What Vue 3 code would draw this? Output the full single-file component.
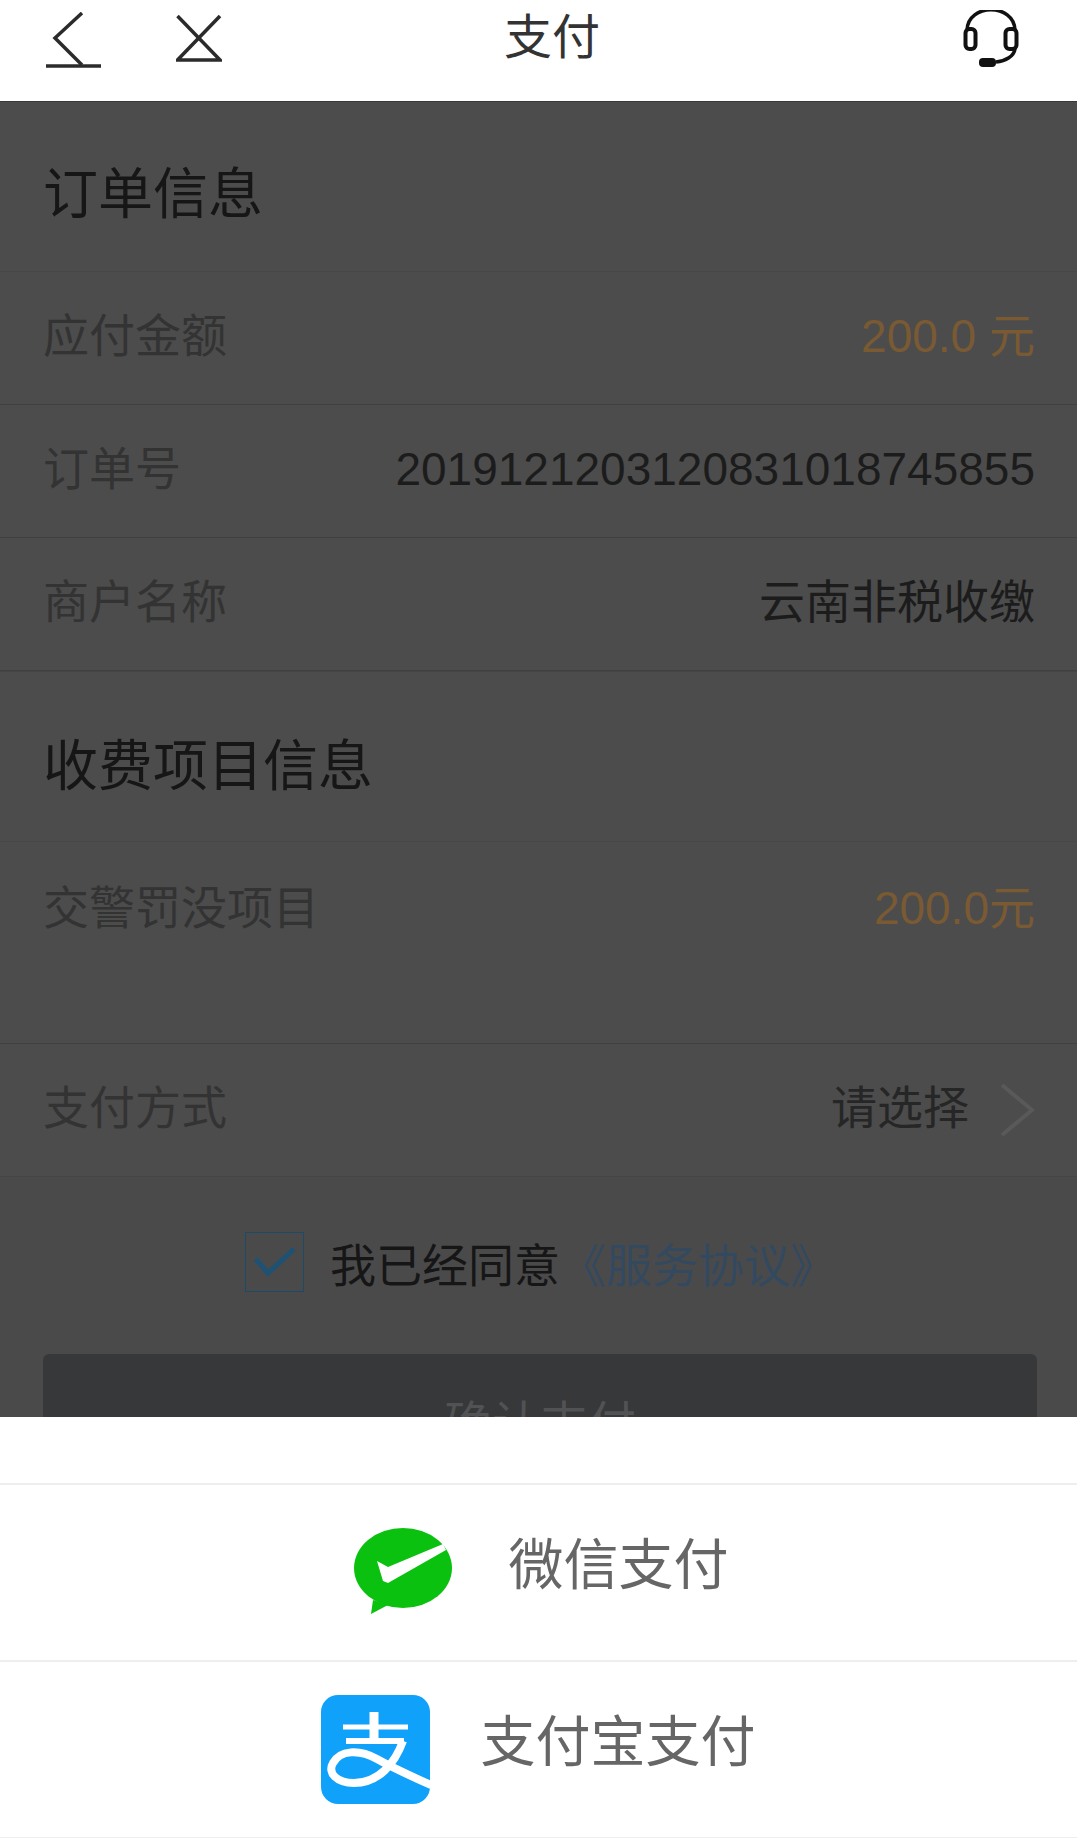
<script setup>
const orderRows = [
  { label: '应付金额', value: '200.0 元', accent: true },
  { label: '订单号', value: '2019121203120831018745855' },
  { label: '商户名称', value: '云南非税收缴' },
]
</script>

<template>
  <div class="page">
    <header class="nav">
      <svg class="back" width="56" height="56" viewBox="46 12 56 56" fill="none" stroke="#2b2b2b" stroke-width="3.500">
        <path d="M82 13 L55 38 L82 65" />
        <path d="M46 66 H101" />
      </svg>
      <svg class="close" width="46" height="48" viewBox="176 14 46 48" fill="none" stroke="#2b2b2b" stroke-width="3.500">
        <path d="M220 16 L177.500 60 H220 L177.500 16" />
      </svg>
      <h1 class="title">支付</h1>
      <svg class="service" width="58" height="58" viewBox="962 10 58 58" fill="none" stroke="#111" stroke-width="3.500">
        <path d="M967 30 C968 3 1014 3 1015 30" />
        <rect x="965.500" y="29" width="10" height="20" rx="4" stroke-width="4" />
        <rect x="1005.500" y="29" width="11" height="20" rx="4" stroke-width="4" />
        <path d="M1015 49 C1014 56 1006 61 996 62" />
        <rect x="979" y="58" width="17" height="9" rx="4" fill="#111" stroke="none" />
      </svg>
    </header>

    <main class="content">
      <section class="panel">
        <h2 class="head">订单信息</h2>
        <div v-for="row in orderRows" :key="row.label" class="row">
          <span class="label">{{ row.label }}</span>
          <span class="value" :class="{ accent: row.accent }">{{ row.value }}</span>
        </div>
      </section>

      <section class="panel">
        <h2 class="head second">收费项目信息</h2>
        <div class="row tall">
          <span class="label">交警罚没项目</span>
          <span class="value accent">200.0元</span>
        </div>
        <div class="row last">
          <span class="label">支付方式</span>
          <span class="choose">
            <span class="value soft">请选择</span>
            <svg class="chev" width="36" height="56" viewBox="0 0 36 56" fill="none" stroke="#5a595a" stroke-width="4">
              <path d="M3 3 L33 28 L3 53" />
            </svg>
          </span>
        </div>
      </section>

      <div class="agree">
        <span class="check">
          <svg width="42" height="30" viewBox="0 0 42 30" fill="none" stroke="#1d5274" stroke-width="5">
            <path d="M1.500 12 L14 26 L40 2" />
          </svg>
        </span>
        <span class="agree-text">我已经同意</span>
        <span class="link">《服务协议》</span>
      </div>

      <button class="confirm" type="button">确认支付</button>
    </main>

    <section class="sheet">
      <div class="pay wechat">
        <svg class="wechat-icon" width="98" height="86" viewBox="0 0 98 86">
          <ellipse cx="49" cy="40" rx="49" ry="40" fill="#0bc10f" />
          <path d="M19 72 L17 86 L34 77 Z" fill="#0bc10f" />
          <path d="M23 33 L34 39 L89 16 L92 22 L34 55 L29 53 Z" fill="#fff" />
        </svg>
        <span class="pay-text">微信支付</span>
      </div>
      <div class="pay alipay">
        <svg width="109" height="109" viewBox="0 0 109 109">
          <defs>
            <clipPath id="ali-clip"><rect width="109" height="109" rx="17" /></clipPath>
          </defs>
          <g clip-path="url(#ali-clip)">
            <rect width="109" height="109" fill="#10a2fb" />
            <g fill="none" stroke="#fff" stroke-linecap="butt">
              <path d="M53 17 V45" stroke-width="9" />
              <path d="M22 32 H87" stroke-width="5" />
              <path d="M25 46 H83" stroke-width="6" />
              <path d="M82 46 C74 68 58 88 33 88 C16 88 6 78 12 68 C19 55 38 54 56 64 C74 74 92 82 112 91" stroke-width="8" />
            </g>
          </g>
        </svg>
        <span class="pay-text">支付宝支付</span>
      </div>
    </section>
  </div>
</template>

<style scoped>
.page {
  width: 1077px;
  height: 1838px;
  overflow: hidden;
  display: flex;
  flex-direction: column;
  background: #fff;
  font-family: "Liberation Sans", "Noto Sans CJK SC", sans-serif;
  font-weight: 400;
}
.nav {
  height: 101px;
  flex: none;
  display: flex;
  align-items: flex-start;
  box-sizing: border-box;
  padding: 0 57px 0 46px;
  background: #fff;
}
.back { margin-top: 12px; flex: none; }
.close { margin-top: 14px; margin-left: 74px; flex: none; }
.title {
  margin: 6px 0 0 282px;
  font-size: 48px;
  line-height: 64px;
  font-weight: 400;
  color: #333;
}
.service { margin-top: 10px; margin-left: auto; flex: none; }
.content {
  height: 1316px;
  flex: none;
  overflow: hidden;
  border-top: 1px solid #383838;
  box-sizing: border-box;
  background: #4b4a4b;
}
.panel { background: #4c4c4c; }
.panel + .panel { border-top: 1px solid #454545; }
.head {
  margin: 0;
  height: 170px;
  box-sizing: border-box;
  padding: 56px 43px 0;
  border-bottom: 1px solid #474747;
  font-size: 55px;
  line-height: 72px;
  font-weight: 400;
  color: #161616;
}
.head.second { padding-top: 58px; }
.row {
  height: 133px;
  box-sizing: border-box;
  display: flex;
  align-items: center;
  justify-content: space-between;
  padding: 0 42px 4px 43px;
  border-bottom: 1px solid #404040;
  font-size: 46px;
}
.row.tall {
  height: 202px;
  align-items: flex-start;
  padding-top: 36px;
}
.row.last { border-bottom: 1px solid #454545; }
.label { color: #333; line-height: 60px; }
.value { color: #1c1c1c; line-height: 60px; }
.value.accent { color: #7a5a33; }
.value.soft { color: #262626; }
.choose { display: flex; align-items: center; gap: 30px; }
.chev { flex: none; margin-top: 4px; }
.agree {
  height: 170px;
  box-sizing: border-box;
  display: flex;
  align-items: center;
  padding-left: 245px;
  margin-bottom: 7px;
}
.check {
  width: 59px;
  height: 60px;
  flex: none;
  box-sizing: border-box;
  border: 1px solid #1d4a66;
  display: flex;
  align-items: center;
  justify-content: center;
}
.agree-text {
  margin-left: 26px;
  font-size: 46px;
  color: #161616;
}
.link {
  font-size: 46px;
  color: #33495f;
}
.confirm {
  display: block;
  width: 994px;
  height: 132px;
  margin: 0 0 0 43px;
  padding: 0;
  border: 0;
  border-radius: 6px;
  background: #37383a;
  color: #515254;
  font-family: inherit;
  font-weight: 400;
  font-size: 48px;
}
.sheet {
  flex: 1;
  background: #fff;
  padding-top: 66px;
}
.pay {
  display: flex;
  align-items: center;
  justify-content: center;
  height: 175px;
  border-top: 2px solid #eeeef0;
  font-size: 55px;
  color: #666;
}
.pay-text { line-height: 72px; padding-bottom: 16px; }
.pay:last-child { border-bottom: 2px solid #eeeef0; }
.wechat { gap: 56px; padding-left: 6px; }
.wechat-icon { margin-bottom: 4px; }
.alipay { gap: 50px; }
</style>

<style>
html, body { margin: 0; background: #fff; }
</style>
